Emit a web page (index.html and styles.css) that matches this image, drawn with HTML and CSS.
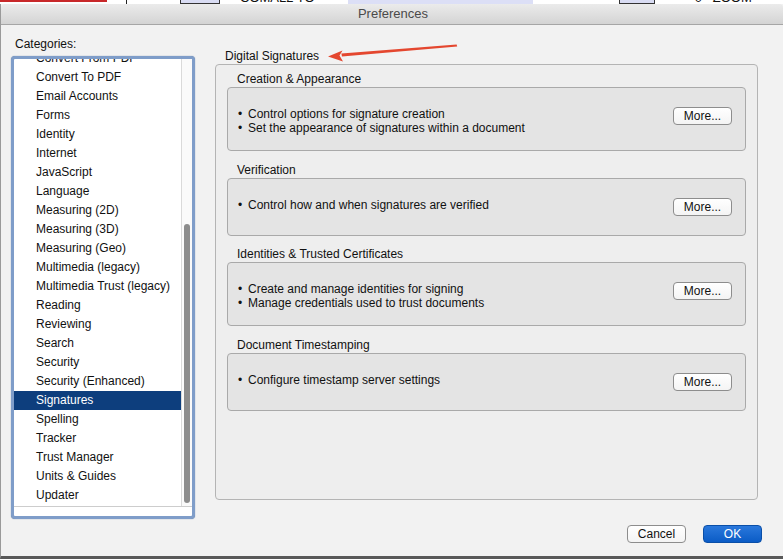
FILE: index.html
```html
<!DOCTYPE html>
<html lang="en">
  <head>
    <meta charset="UTF-8" />
    <title>Preferences</title>
    <link rel="stylesheet" href="styles.css">
  </head>
  <body>
    <div class="desk-strip">
      <div class="strip-red"></div>
      <div class="strip-tick"></div>
      <div class="strip-box"></div>
      <div class="strip-text">COMAL2 TO</div>
      <div class="strip-fill"></div>
      <div class="strip-box strip-box-2"></div>
      <div class="strip-text strip-text-2">0 &nbsp; ZOOM</div>
    </div>

    <div class="window">
      <div class="titlebar">Preferences</div>

      <div class="content">
        <div class="sidebar">
          <div class="cat-label">Categories:</div>
          <div class="listbox">
            <div class="list-view">
              <ul class="list">
                <li>Convert From PDF</li>
                <li>Convert To PDF</li>
                <li>Email Accounts</li>
                <li>Forms</li>
                <li>Identity</li>
                <li>Internet</li>
                <li>JavaScript</li>
                <li>Language</li>
                <li>Measuring (2D)</li>
                <li>Measuring (3D)</li>
                <li>Measuring (Geo)</li>
                <li>Multimedia (legacy)</li>
                <li>Multimedia Trust (legacy)</li>
                <li>Reading</li>
                <li>Reviewing</li>
                <li>Search</li>
                <li>Security</li>
                <li>Security (Enhanced)</li>
                <li class="selected">Signatures</li>
                <li>Spelling</li>
                <li>Tracker</li>
                <li>Trust Manager</li>
                <li>Units &amp; Guides</li>
                <li>Updater</li>
              </ul>
              <div class="vscroll"><div class="thumb"></div></div>
            </div>
          </div>
        </div>

        <div class="main">
          <div class="main-title">Digital Signatures</div>
          <div class="group">
            <div class="section">
              <div class="sec-label">Creation &amp; Appearance</div>
              <div class="sec-box">
                <ul class="bullets">
                  <li>Control options for signature creation</li>
                  <li>Set the appearance of signatures within a document</li>
                </ul>
                <button class="btn">More...</button>
              </div>
            </div>

            <div class="section">
              <div class="sec-label">Verification</div>
              <div class="sec-box">
                <ul class="bullets">
                  <li>Control how and when signatures are verified</li>
                </ul>
                <button class="btn">More...</button>
              </div>
            </div>

            <div class="section section-tight">
              <div class="sec-label">Identities &amp; Trusted Certificates</div>
              <div class="sec-box">
                <ul class="bullets">
                  <li>Create and manage identities for signing</li>
                  <li>Manage credentials used to trust documents</li>
                </ul>
                <button class="btn">More...</button>
              </div>
            </div>

            <div class="section">
              <div class="sec-label">Document Timestamping</div>
              <div class="sec-box">
                <ul class="bullets">
                  <li>Configure timestamp server settings</li>
                </ul>
                <button class="btn">More...</button>
              </div>
            </div>
          </div>
        </div>
      </div>

      <div class="footer">
        <button class="btn">Cancel</button>
        <button class="btn btn-ok">OK</button>
      </div>

      <!-- annotation arrow drawn over the dialog -->
      <svg class="arrow" width="140" height="24" viewBox="0 0 140 24">
        <polygon points="129.6,3.6 130.2,5.6 15,15.6 14.4,12.4" fill="#e4472f" />
        <polygon points="1,15.5 15.5,9.5 12.5,14.6 16,20.4" fill="#e4472f" />
      </svg>
    </div>
  </body>
</html>
```

FILE: styles.css
```css
body {
  margin: 0;
  padding: 0;
  width: 783px;
  height: 559px;
  overflow: hidden;
  background-color: #ffffff;
  font-family: "Liberation Sans", Arial, sans-serif;
  font-size: 12px;
  color: #111;
}

/* the bit of the app behind the dialog */
.desk-strip {
  height: 4px;
  display: flex;
  overflow: hidden;
  background-color: #fff;
}
.strip-red {
  width: 107px;
  height: 2px;
  background-color: #c8282a;
}
.strip-tick {
  width: 1px;
  height: 4px;
  margin-left: 19px;
  background-color: #222;
}
.strip-box {
  width: 38px;
  height: 3px;
  margin-left: 53px;
  margin-top: -1px;
  border: 1px solid #333;
  background-color: #d9dcf3;
}
.strip-text {
  margin-left: 20px;
  margin-top: -9px;
  font-size: 13px;
  line-height: 13px;
  color: #111;
}
.strip-fill {
  width: 185px;
  height: 4px;
  margin-left: 33px;
  background-color: #dcdff6;
}
.strip-box-2 {
  width: 34px;
  margin-left: 86px;
}
.strip-text-2 {
  margin-left: 40px;
}

.window {
  position: relative;
  background-color: #f2f2f2;
  border-left: 1px solid #9a9a9a;
  border-bottom: 3px solid #595959;
}

.titlebar {
  height: 20px;
  line-height: 20px;
  text-align: center;
  font-size: 13px;
  color: #4a4a4a;
  padding-left: 2px;
  background: linear-gradient(#ebebeb, #d4d4d4);
  border-bottom: 1px solid #a6a6a6;
  border-radius: 4px 4px 0 0;
}

.content {
  display: flex;
  height: 494px;
}

.sidebar {
  width: 184px;
  margin-left: 10px;
  padding-top: 12px;
}
.cat-label {
  line-height: 14px;
  padding-left: 4px;
  margin-bottom: 5px;
}
.listbox {
  height: 457px;
  border: 3px solid #7f9dc9;
  border-radius: 4px;
  background-color: #fff;
  box-shadow: 0 0 1px #506e99;
}
.list-view {
  display: flex;
  height: 447px;
  overflow: hidden;
  border-bottom: 1px solid #cdcdcd;
}
.list {
  list-style: none;
  margin: -10px 0 0 0;
  padding: 0;
  width: 167px;
}
.list li {
  height: 19px;
  line-height: 19px;
  padding-left: 22px;
  white-space: nowrap;
}
.list li.selected {
  background-color: #0d3e7d;
  color: #fff;
}
.vscroll {
  width: 10px;
  border-left: 1px solid #dadada;
  background-color: #fafafa;
}
.thumb {
  width: 6px;
  height: 279px;
  margin-top: 165px;
  margin-left: 2px;
  border-radius: 3px;
  background-color: #8c8c8c;
}

.main {
  width: 543px;
  margin-left: 20px;
  padding-top: 24px;
}
.main-title {
  line-height: 14px;
  padding-left: 10px;
  margin-bottom: 1px;
}
.group {
  height: 427px;
  padding: 7px 11px 0 11px;
  border: 1px solid #b4b4b4;
  border-radius: 4px;
  background-color: #eeeeee;
}
.section + .section {
  margin-top: 12px;
}
.section + .section-tight {
  margin-top: 11px;
}
.sec-label {
  line-height: 14px;
  padding-left: 10px;
  margin-bottom: 1px;
}
.sec-box {
  display: flex;
  align-items: flex-start;
  justify-content: space-between;
  box-sizing: border-box;
  min-height: 58px;
  padding: 19px 13px 15px 10px;
  border: 1px solid #a9a9a9;
  border-radius: 4px;
  background-color: #e4e4e4;
}
.bullets {
  list-style: none;
  margin: 0;
  padding: 0;
}
.bullets li {
  line-height: 14px;
}
.bullets li::before {
  content: "\2022";
  display: inline-block;
  width: 10px;
}

.btn {
  width: 59px;
  height: 18px;
  padding: 0;
  font-family: "Liberation Sans", Arial, sans-serif;
  font-size: 12px;
  color: #111;
  background: linear-gradient(#ffffff, #f4f4f4);
  border: 1px solid #8d8d8d;
  border-radius: 4px;
}

.footer {
  display: flex;
  justify-content: flex-end;
  gap: 17px;
  padding: 6px 21px 13px 0;
}
.btn-ok {
  color: #fff;
  background: linear-gradient(#2a78dc, #0b5cc6);
  border-color: #0a4fa8;
}

.arrow {
  position: absolute;
  left: 326px;
  top: 37px;
}
```
